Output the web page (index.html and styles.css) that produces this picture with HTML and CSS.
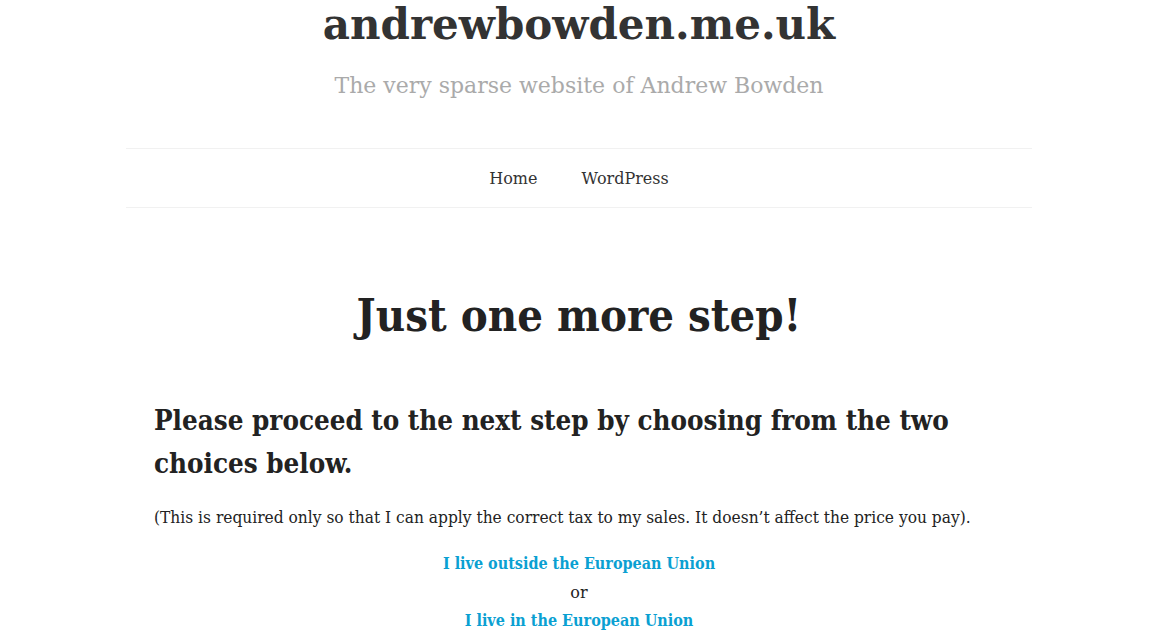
FILE: index.html
```html
<!DOCTYPE html>
<html lang="en">
<head>
<meta charset="utf-8">
<title>andrewbowden.me.uk</title>
<link rel="stylesheet" href="styles.css">
</head>
<body>
<header class="site-header">
  <h1 class="site-title">andrewbowden.me.uk</h1>
  <p class="site-desc">The very sparse website of Andrew Bowden</p>
</header>
<nav class="main-nav">
  <a href="#" class="nav-link">Home</a>
  <a href="#" class="nav-link">WordPress</a>
</nav>
<main class="content">
  <h1 class="page-title">Just one more step!</h1>
  <div class="entry">
    <h2 class="lead">Please proceed to the next step by choosing from the two choices below.</h2>
    <p class="note">(This is required only so that I can apply the correct tax to my sales. It doesn’t affect the price you pay).</p>
    <div class="choices">
      <a href="#" class="choice">I live outside the European Union</a>
      <span class="or">or</span>
      <a href="#" class="choice">I live in the European Union</a>
    </div>
  </div>
</main>
</body>
</html>
```
FILE: styles.css
```css
html, body {
  margin: 0;
  padding: 0;
  background: #fff;
}
body {
  font-family: "DejaVu Serif", serif;
  color: #2b2b2b;
}
.site-header {
  text-align: center;
}
.site-title {
  margin: 0;
  font-size: 42px;
  line-height: 50px;
  font-weight: bold;
  color: #333;
}
.site-desc {
  margin: 21px 0 0;
  font-size: 22px;
  line-height: 30px;
  color: #aaa;
}
.main-nav {
  width: 906px;
  margin: 47px auto 0;
  border-top: 1px solid #f1f1f1;
  border-bottom: 1px solid #f1f1f1;
  height: 58px;
  display: flex;
  justify-content: center;
  align-items: center;
  gap: 44px;
}
.nav-link {
  font-family: "DejaVu Serif", serif;
  font-size: 16px;
  color: #333;
  text-decoration: none;
}
.content {
  width: 850px;
  margin: 0 auto;
}
.page-title {
  margin: 78px 0 0;
  text-align: center;
  font-size: 45px;
  line-height: 60px;
  font-weight: bold;
  color: #222;
  font-stretch: condensed;
}
.entry {
  margin-top: 53px;
}
.lead {
  margin: 0;
  font-size: 27.5px;
  line-height: 43px;
  font-weight: bold;
  color: #222;
  font-stretch: condensed;
}
.note {
  margin: 18px 0 0;
  font-size: 17.2px;
  line-height: 28px;
  color: #222;
  font-stretch: condensed;
}
.choices {
  margin-top: 19px;
  display: flex;
  flex-direction: column;
  align-items: center;
  font-size: 16px;
  line-height: 28.5px;
}
.choice {
  color: #0aa0d2;
  font-weight: bold;
  text-decoration: none;
  font-stretch: condensed;
}
.or {
  color: #222;
}
```
